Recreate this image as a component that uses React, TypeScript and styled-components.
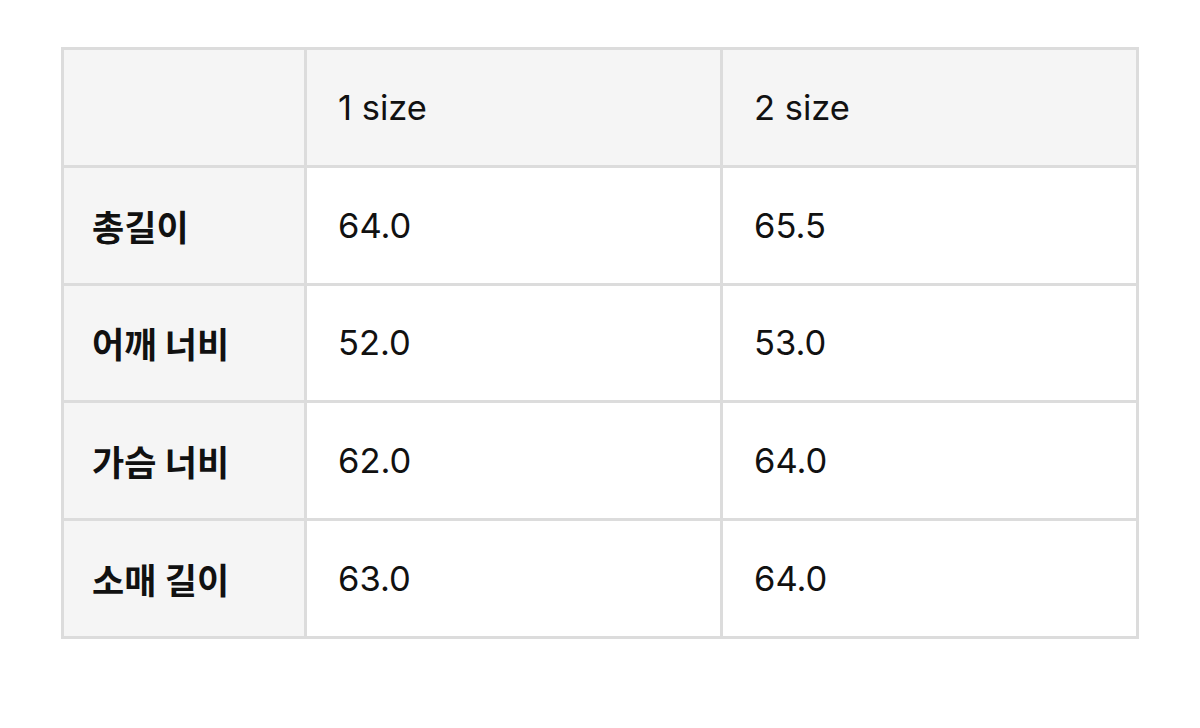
import React from "react";
import styled, { createGlobalStyle } from "styled-components";

const Global = createGlobalStyle`
  html, body { margin: 0; padding: 0; background: #ffffff; }
  body { font-family: "Inter", "Noto Sans CJK KR", sans-serif; color: #111111; }
`;

const Page = styled.div`
  width: 1200px;
  height: 728px;
  padding: 47px 0 0 61px;
  box-sizing: border-box;
`;

const Table = styled.div`
  display: grid;
  grid-template-columns: 240px 413px 413px;
  grid-template-rows: repeat(5, 1fr);
  gap: 3px;
  padding: 3px;
  width: 1078px;
  height: 592px;
  box-sizing: border-box;
  background: #dcdcdc;
`;

const Cell = styled.div<{ $shaded?: boolean; $bold?: boolean }>`
  display: flex;
  align-items: center;
  padding-left: ${(p) => (p.$bold ? "28px" : "31px")};
  background: ${(p) => (p.$shaded ? "#f5f5f5" : "#ffffff")};
  font-family: "Inter", "Noto Sans CJK KR", sans-serif;
  font-size: ${(p) => (p.$bold ? "35px" : "34.5px")};
  font-weight: ${(p) => (p.$bold ? 700 : 400)};
  color: #111111;
`;

const rows: [string, string, string][] = [
  ["총길이", "64.0", "65.5"],
  ["어깨 너비", "52.0", "53.0"],
  ["가슴 너비", "62.0", "64.0"],
  ["소매 길이", "63.0", "64.0"],
];

export default function App() {
  return (
    <>
      <Global />
      <Page>
        <Table>
          <Cell $shaded />
          <Cell $shaded>1 size</Cell>
          <Cell $shaded>2 size</Cell>
          {rows.map(([label, a, b]) => (
            <React.Fragment key={label}>
              <Cell $shaded $bold>
                {label}
              </Cell>
              <Cell>{a}</Cell>
              <Cell>{b}</Cell>
            </React.Fragment>
          ))}
        </Table>
      </Page>
    </>
  );
}
